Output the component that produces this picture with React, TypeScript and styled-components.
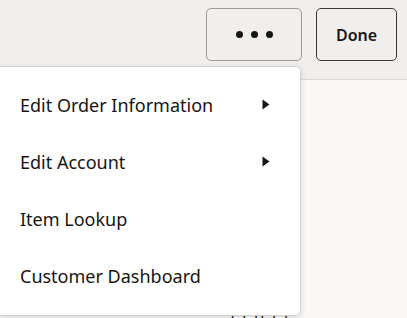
import React from "react";
import styled, { createGlobalStyle } from "styled-components";

const Global = createGlobalStyle`
  html, body { margin: 0; padding: 0; }
  body {
    width: 407px;
    height: 318px;
    overflow: hidden;
    background: #f9f8f6;
    font-family: "Noto Sans", "Open Sans", sans-serif;
    color: #161513;
  }
`;

const Page = styled.div`
  position: relative;
  width: 407px;
  height: 318px;
  overflow: hidden;
  display: flex;
  flex-direction: column;
`;

const Header = styled.header`
  height: 80px;
  box-sizing: border-box;
  border-bottom: 1px solid #d9d7d4;
  background: #f1efed;
  display: flex;
  justify-content: flex-end;
  align-items: flex-start;
  gap: 14px;
  padding: 8px 10px 0 0;
`;

const Button = styled.button<{ $strong?: boolean }>`
  height: 53px;
  width: ${(p) => (p.$strong ? "81px" : "96px")};
  box-sizing: border-box;
  border-radius: 5px;
  border: 1px solid ${(p) => (p.$strong ? "#3a3836" : "#9e9b98")};
  background: transparent;
  display: flex;
  align-items: center;
  justify-content: center;
  gap: 8px;
  font-family: "Noto Sans", sans-serif;
  font-weight: 600;
  font-size: 16px;
  color: #161513;
  padding: 0;
`;

const Dot = styled.span`
  width: 7px;
  height: 7px;
  border-radius: 50%;
  background: #161513;
`;

const Body = styled.main`
  flex: 1;
  display: flex;
  justify-content: flex-end;
  align-items: flex-end;
  padding: 0 117px 0 0;
`;

const Peek = styled.div`
  font-size: 16px;
  line-height: 1;
  margin-bottom: -11px;
  color: #161513;
  letter-spacing: 2px;
`;

const Menu = styled.ul`
  position: absolute;
  top: 66px;
  left: 0;
  width: 301px;
  margin: 0;
  padding: 9px 0 11px;
  list-style: none;
  box-sizing: border-box;
  background: #ffffff;
  border: 1px solid #d6d3d0;
  border-left: none;
  border-radius: 0 5px 5px 0;
  box-shadow: 0 2px 6px rgba(0, 0, 0, 0.12);
`;

const Item = styled.li`
  height: 57px;
  display: flex;
  align-items: center;
  justify-content: space-between;
  padding: 0 30px 0 20px;
  font-size: 18px;
  color: #161513;
`;

const Arrow = () => (
  <svg width="8" height="11" viewBox="0 0 8 11">
    <path d="M0.5 0.5 L7.5 5.5 L0.5 10.5 Z" fill="#161513" />
  </svg>
);

const items: { label: string; sub: boolean }[] = [
  { label: "Edit Order Information", sub: true },
  { label: "Edit Account", sub: true },
  { label: "Item Lookup", sub: false },
  { label: "Customer Dashboard", sub: false },
];

export default function App() {
  return (
    <Page>
      <Global />
      <Header>
        <Button aria-label="More">
          <Dot />
          <Dot />
          <Dot />
        </Button>
        <Button $strong>Done</Button>
      </Header>
      <Body>
        <Peek>lddldd</Peek>
      </Body>
      <Menu>
        {items.map((it) => (
          <Item key={it.label}>
            <span>{it.label}</span>
            {it.sub && <Arrow />}
          </Item>
        ))}
      </Menu>
    </Page>
  );
}
